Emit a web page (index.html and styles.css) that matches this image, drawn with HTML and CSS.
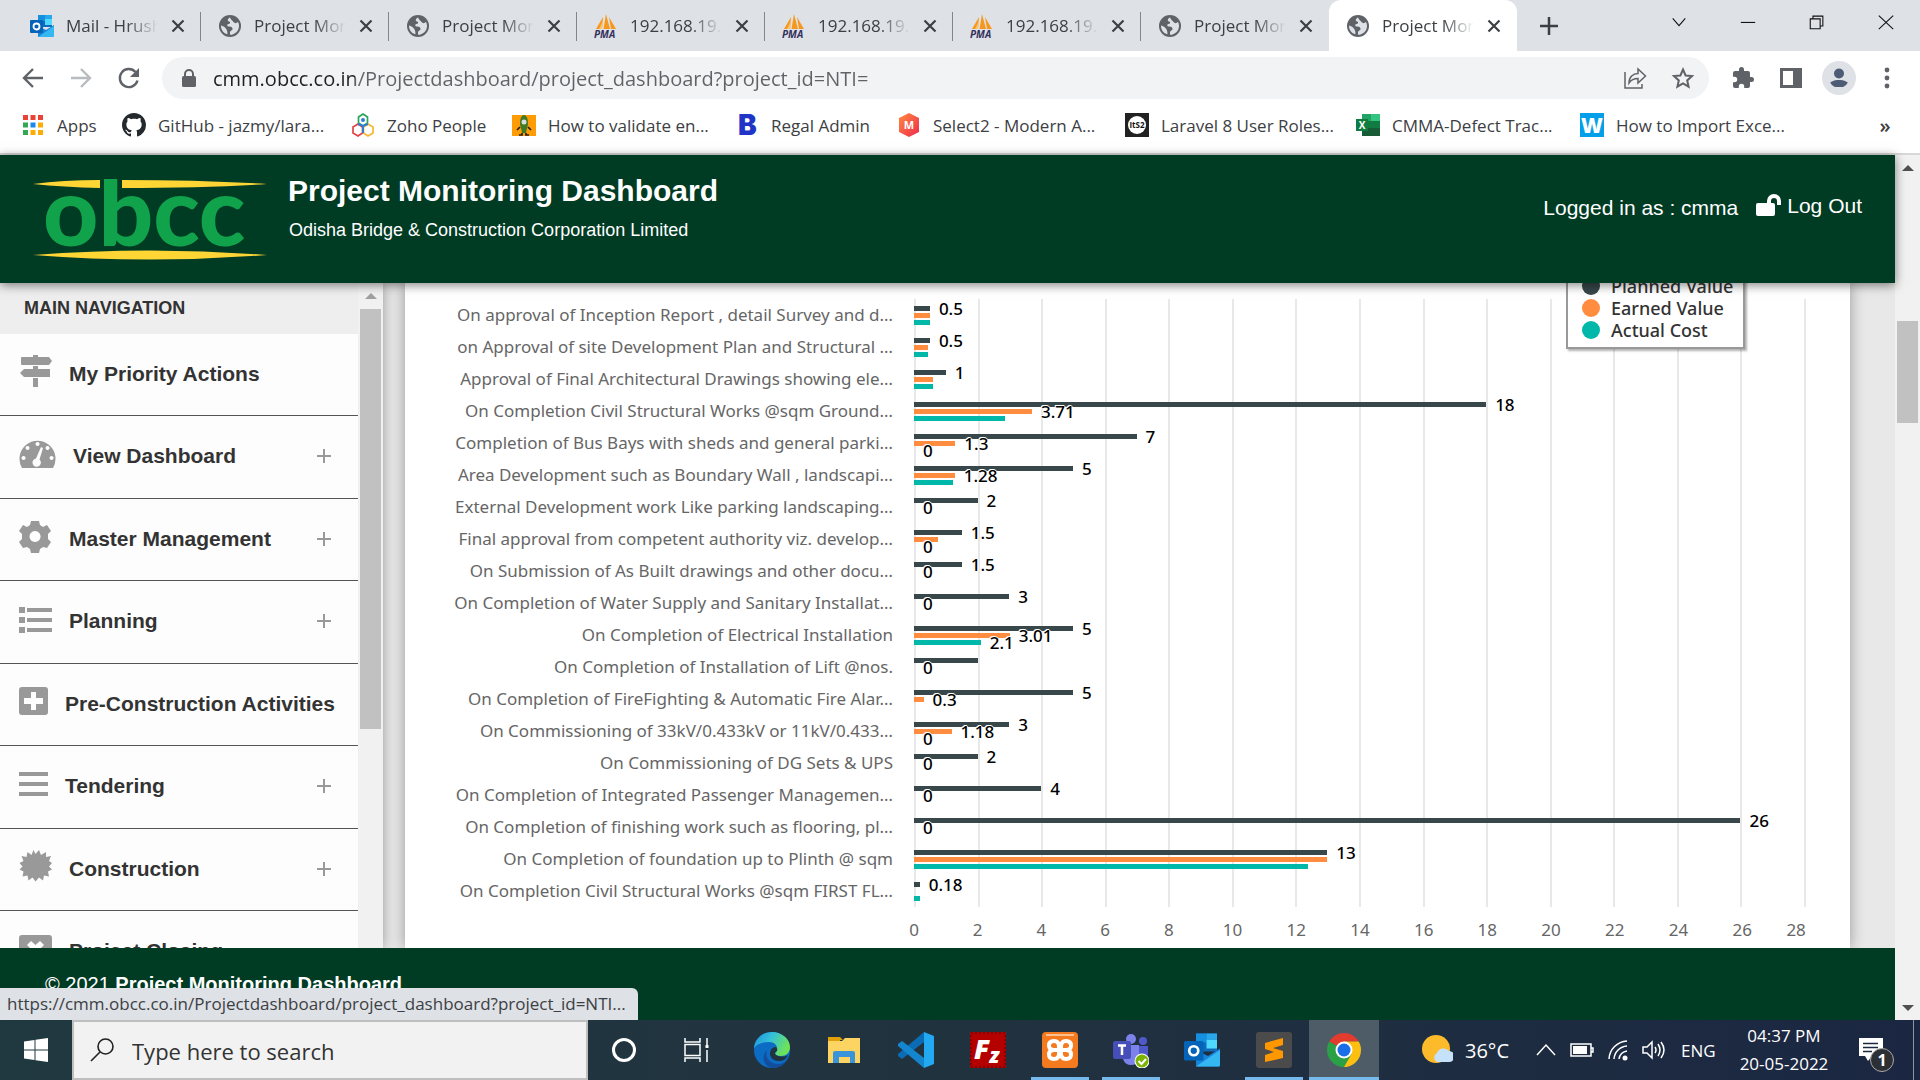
FILE: index.html
```html
<!DOCTYPE html>
<html lang="en">
<head>
<meta charset="utf-8">
<title>Project Monitoring Dashboard</title>
<link rel="stylesheet" href="styles.css">
</head>
<body>
<svg class="defs" aria-hidden="true">
  <symbol id="globe" viewBox="0 0 24 24"><circle cx="12" cy="12" r="11" fill="#5f6368"/><path d="M12 3.500C9 5 9.500 7 11 7.500c2 .5 1 2.500-.5 2.500S9 12 10 12.500c2 0 4 0 4.500 2s-2.500 2-2.500 4v2.300C16.500 21 21 17 21 12c0-1.500-.5-3-1-4-1.500 1.500-3.500 1.500-4.500 0S13 6 12 3.500zM3 11.500c2 .3 3.500 1.500 4.500 2.500s2 3 2 6.300C5.500 19.500 3 16 3 11.500z" fill="#dee1e6"/></symbol>
  <symbol id="close" viewBox="0 0 16 16"><path d="M2.500 2.500l11 11M13.500 2.500l-11 11" stroke="#3c4043" stroke-width="2.200" fill="none"/></symbol>
  <symbol id="pma" viewBox="0 0 24 24"><path d="M2 15L9 3l-1 12zM9.500 15L12 0l4 15zM15 3l7 12h-5z" fill="#f7981d"/><path d="M5 15L9 7l-1 8z" fill="#fcc36b"/><text x="0" y="23.500" font-size="10" font-weight="700" font-style="italic" fill="#33305c">PMA</text></symbol>
  <symbol id="outlook" viewBox="0 0 24 24"><path d="M8 1h14v12H8z" fill="#0f6cbd"/><path d="M8 1h7v6H8z" fill="#1490df"/><path d="M15 5h7v6h-7z" fill="#50d9ff"/><path d="M15 1h7v4h-7z" fill="#28a8ea"/><path d="M8 12l8 4 8-5v11a1 1 0 0 1-1 1H8z" fill="#1784d9"/><path d="M8 23l16-11v10a1 1 0 0 1-1 1z" fill="#35b8f1"/><rect y="6" width="13" height="13" rx="1" fill="#0364b8"/><circle cx="6.500" cy="12.500" r="3" fill="none" stroke="#fff" stroke-width="1.800"/></symbol>
  <symbol id="plus" viewBox="0 0 16 16"><path d="M8 1v14M1 8h14" stroke="#999" stroke-width="2" fill="none"/></symbol>
</svg>

<div class="tabs">
  <div class="tab"><svg class="fav"><use href="#outlook"/></svg><span class="tab-title">Mail - Hrushikesh</span><button class="tab-close" aria-label="Close tab"><svg><use href="#close"/></svg></button></div>
  <div class="tab"><svg class="fav"><use href="#globe"/></svg><span class="tab-title">Project Monitoring</span><button class="tab-close" aria-label="Close tab"><svg><use href="#close"/></svg></button></div>
  <div class="tab"><svg class="fav"><use href="#globe"/></svg><span class="tab-title">Project Monitoring</span><button class="tab-close" aria-label="Close tab"><svg><use href="#close"/></svg></button></div>
  <div class="tab"><svg class="fav"><use href="#pma"/></svg><span class="tab-title">192.168.19.10</span><button class="tab-close" aria-label="Close tab"><svg><use href="#close"/></svg></button></div>
  <div class="tab"><svg class="fav"><use href="#pma"/></svg><span class="tab-title">192.168.19.10</span><button class="tab-close" aria-label="Close tab"><svg><use href="#close"/></svg></button></div>
  <div class="tab"><svg class="fav"><use href="#pma"/></svg><span class="tab-title">192.168.19.10</span><button class="tab-close" aria-label="Close tab"><svg><use href="#close"/></svg></button></div>
  <div class="tab last"><svg class="fav"><use href="#globe"/></svg><span class="tab-title">Project Monitoring</span><button class="tab-close" aria-label="Close tab"><svg><use href="#close"/></svg></button></div>
  <div class="tab active"><svg class="fav"><use href="#globe"/></svg><span class="tab-title">Project Monitoring</span><button class="tab-close" aria-label="Close tab"><svg><use href="#close"/></svg></button></div>
  <button class="new-tab" aria-label="New tab"><svg viewBox="0 0 20 20"><path d="M10 1v18M1 10h18" stroke="#3c4043" stroke-width="2.500"/></svg></button>
  <div class="window-controls">
    <button aria-label="Search tabs"><svg viewBox="0 0 20 20"><path d="M3 6l7 8 7-8" class="thin"/></svg></button>
    <button aria-label="Minimize"><svg viewBox="0 0 20 20"><path d="M2 10.500h16" class="thin"/></svg></button>
    <button aria-label="Restore"><svg viewBox="0 0 20 20"><path d="M2.500 6.500h11v11h-11zM5.500 6V3.500h11v11H14" class="thin"/></svg></button>
    <button aria-label="Close"><svg viewBox="0 0 20 20"><path d="M2 3l16 15M18 3L2 18" class="thin"/></svg></button>
  </div>
</div>

<div class="toolbar">
  <button class="tool" aria-label="Back"><svg viewBox="0 0 24 24"><path d="M22 12H3M12 3l-9 9 9 9" class="stroke"/></svg></button>
  <button class="tool" aria-label="Forward"><svg viewBox="0 0 24 24"><path d="M2 12h19M12 3l9 9-9 9" class="stroke pale"/></svg></button>
  <button class="tool" aria-label="Reload"><svg viewBox="0 0 24 24"><path d="M20.500 14.500A9 9 0 1 1 18.500 6" class="stroke"/><path d="M22 2v9h-9z" fill="#5f6368"/></svg></button>
  <div class="omnibox">
    <svg class="lock" viewBox="0 0 14 18"><rect x="0" y="7" width="14" height="11" rx="1.500" fill="#5f6368"/><path d="M3 8V5a4 4 0 0 1 8 0v3" fill="none" stroke="#5f6368" stroke-width="2"/></svg>
    <input class="url" type="text" aria-label="Address" value="cmm.obcc.co.in/Projectdashboard/project_dashboard?project_id=NTI=">
    <button class="tool" aria-label="Share"><svg viewBox="0 0 24 24"><path d="M2 6v16h17v-4" class="line"/><path d="M6 17c0-6 4-9.500 9-9.500V3l7.500 7-7.500 7v-4.500c-4 0-7 1.500-9 4.500z" class="line"/></svg></button>
    <button class="tool" aria-label="Bookmark"><svg viewBox="0 0 24 24"><path d="M12 3.500l2.600 6 6.400.6-4.800 4.300 1.400 6.300-5.600-3.300-5.600 3.300 1.400-6.300L3 10.100l6.400-.6z" fill="none" stroke="#5f6368" stroke-width="2"/></svg></button>
  </div>
  <button class="tool" aria-label="Extensions"><svg viewBox="0 0 24 24"><path d="M20.500 11H19V7a2 2 0 0 0-2-2h-4V3.500a2.500 2.500 0 0 0-5 0V5H4a2 2 0 0 0-2 2v3.800h1.500a2.700 2.700 0 0 1 0 5.400H2V20a2 2 0 0 0 2 2h3.800v-1.500a2.700 2.700 0 0 1 5.400 0V22H17a2 2 0 0 0 2-2v-4h1.500a2.500 2.500 0 0 0 0-5z" fill="#5f6368"/></svg></button>
  <button class="tool" aria-label="Side panel"><svg viewBox="0 0 24 24"><path d="M1 2h22v20H1zM4 5v14h10V5z" fill="#5f6368" fill-rule="evenodd"/></svg></button>
  <button class="tool avatar" aria-label="Profile"><svg viewBox="0 0 20 20"><circle cx="10" cy="5.500" r="5" fill="#4d5b75"/><path d="M0 19v-2c0-3 5-5 10-5s10 2 10 5v2z" fill="#4d5b75"/></svg></button>
  <button class="tool" aria-label="Menu"><svg viewBox="0 0 24 24"><circle cx="12" cy="4" r="2.400" fill="#5f6368"/><circle cx="12" cy="12" r="2.400" fill="#5f6368"/><circle cx="12" cy="20" r="2.400" fill="#5f6368"/></svg></button>
</div>

<nav class="bookmarks" aria-label="Bookmarks">
  <a href="#"><svg viewBox="0 0 24 24"><path d="M2 2h5v5H2zM9.500 2h5v5h-5zM17 2h5v5h-5z" fill="#ea4335"/><path d="M2 9.500h5v5H2zM2 17h5v5H2z" fill="#34a853"/><path d="M9.500 9.500h5v5h-5z" fill="#1a88f0"/><path d="M17 9.500h5v5h-5zM9.500 17h5v5h-5zM17 17h5v5h-5z" fill="#fbad05"/></svg>Apps</a>
  <a href="#"><svg viewBox="0 0 16 16"><path fill="#24292e" d="M8 0C3.580 0 0 3.580 0 8c0 3.540 2.290 6.530 5.470 7.590.4.070.55-.17.55-.38 0-.19-.01-.82-.01-1.490-2.010.37-2.530-.49-2.690-.94-.09-.23-.48-.94-.82-1.130-.28-.15-.68-.52-.01-.53.63-.01 1.080.58 1.230.82.72 1.210 1.870.87 2.330.66.070-.52.28-.87.51-1.070-1.780-.2-3.640-.89-3.640-3.950 0-.87.31-1.590.82-2.150-.08-.2-.36-1.020.08-2.120 0 0 .67-.21 2.200.82.64-.18 1.320-.27 2-.27s1.360.09 2 .27c1.530-1.040 2.200-.82 2.200-.82.44 1.100.16 1.920.08 2.120.51.56.82 1.270.82 2.150 0 3.070-1.870 3.750-3.650 3.950.29.25.54.73.54 1.480 0 1.070-.01 1.930-.01 2.200 0 .21.15.46.55.38A8.010 8.010 0 0 0 16 8c0-4.420-3.580-8-8-8z"/></svg>GitHub - jazmy/lara...</a>
  <a href="#"><svg viewBox="0 0 24 24"><path d="M12 1l4.500 3v6L12 13l-4.500-3V4z" fill="none" stroke="#2ba45a" stroke-width="1.700"/><path d="M7 11l4.500 3v6L7 23l-5-3v-6z" fill="none" stroke="#e04549" stroke-width="1.700"/><path d="M17 11l5 3v6l-5 3-4.500-3v-6z" fill="none" stroke="#f5b82e" stroke-width="1.700"/><circle cx="12" cy="7" r="2" fill="#2f7fd0"/><path d="M7 11l5 2 5-2M12 13v7" stroke="#2f7fd0" stroke-width="2" fill="none"/></svg>Zoho People</a>
  <a href="#"><svg viewBox="0 0 24 24"><path fill="#ff9c05" d="M0 2h24v21H0z"/><ellipse cx="12" cy="10" rx="4" ry="8" fill="#3f7a25"/><circle cx="12" cy="9" r="2.500" fill="#ddd"/><path d="M9 14h6l-1 6h-4z" fill="#3f7a25"/><path d="M8 14l-3 3M16 14l3 3M10 20v2H7M14 20v2h3" stroke="#222" stroke-width="1.700" fill="none"/></svg>How to validate en...</a>
  <a href="#"><svg viewBox="0 0 24 24"><text x="3" y="22" font-size="28" font-weight="900" font-family="Inter, sans-serif" fill="#2035c7">B</text></svg>Regal Admin</a>
  <a href="#"><svg viewBox="0 0 24 24"><defs><linearGradient id="mg" x2="1" y2="1"><stop stop-color="#ff8a3c"/><stop offset="1" stop-color="#ee2a50"/></linearGradient></defs><path d="M12 0l10 5v14l-10 5-10-5V5z" fill="url(#mg)"/><text x="12" y="16" text-anchor="middle" font-size="11" font-weight="700" fill="#fff">M</text></svg>Select2 - Modern A...</a>
  <a href="#"><svg viewBox="0 0 24 24"><path fill="#222" d="M0 0h24v24H0z"/><circle cx="12" cy="12" r="9" fill="#fff"/><text x="12" y="15" text-anchor="middle" font-size="8" font-weight="700" fill="#111">ItS2</text></svg>Laravel 8 User Roles...</a>
  <a href="#"><svg viewBox="0 0 24 24"><path d="M6 1h9v7H6z" fill="#21a366"/><path d="M15 1h9v7h-9z" fill="#33c481"/><path d="M6 8h18v7H6z" fill="#107c41"/><path d="M6 15h18v8H6z" fill="#185c37"/><rect y="6" width="12" height="12" fill="#107c41"/><text x="6" y="15.500" text-anchor="middle" font-size="10" font-weight="700" fill="#fff">X</text></svg>CMMA-Defect Trac...</a>
  <a href="#"><svg viewBox="0 0 24 24"><path fill="#049fe8" d="M0 0h24v24H0z"/><text x="12" y="20" text-anchor="middle" font-size="21" font-weight="900" fill="#fff">W</text></svg>How to Import Exce...</a>
  <button class="more" aria-label="More bookmarks">»</button>
</nav>

<div class="viewport">
  <div class="page">
    <header class="site-header">
      <svg class="logo" viewBox="0 0 234 82" role="img" aria-label="obcc">
        <path d="M0 5Q30 1 67 1v8Q30 8 0 5zM89 1q80 0 145 4-60 4-145 4z" fill="#fdd535"/>
        <text class="logo-text" x="10" y="67">obcc</text>
        <path d="M0 76q117-9 234 0-117 9-234 0z" fill="#fdd535"/>
      </svg>
      <div class="brand">
        <h1>Project Monitoring Dashboard</h1>
        <p>Odisha Bridge &amp; Construction Corporation Limited</p>
      </div>
      <div class="account">
        <span>Logged in as : cmma</span>
        <a href="#"><svg viewBox="0 0 25 22"><rect y="9" width="19" height="13" rx="2" fill="#fff"/><path d="M13 10V7a5 5 0 0 1 10 0v4" fill="none" stroke="#fff" stroke-width="4"/></svg>Log Out</a>
      </div>
    </header>

    <div class="body">
      <aside class="sidebar">
        <nav class="menu" aria-label="Main navigation">
          <h2>MAIN NAVIGATION</h2>
          <a href="#"><svg class="ico" viewBox="0 0 33 33"><path d="M14 0h5v2h11l3 4-3 4H3q-1 0-1-1V3q0-1 1-1h11zM14 11h5v3h12v8H5l-4-4 4-4h9zM14 23h5v9h-5z"/></svg><span>My Priority Actions</span></a>
          <a href="#"><svg class="ico dash" viewBox="0 0 37 33"><path fill-rule="evenodd" d="M3 30A18 18 0 1 1 34 30zM18.500 4a2 2 0 1 0 .1 0zM8.500 8a2 2 0 1 0 .1 0zM28.500 8a2 2 0 1 0 .1 0zM4.500 18a2 2 0 1 0 .1 0zM32.500 18a2 2 0 1 0 .1 0zM22 9l-5 11.500a4.200 4.200 0 1 0 3.500 1L24 10z"/></svg><span>View Dashboard</span><svg class="plus"><use href="#plus"/></svg></a>
          <a href="#"><svg class="ico" viewBox="0 0 33 33"><path fill-rule="evenodd" d="M12 1h8l1 4 3 2 4-2 4 6-3 3v5l3 3-4 6-4-1-3 2-1 4h-8l-1-4-3-2-4 1-4-6 3-3v-5l-3-3 4-6 4 2 3-2zM16 11a5.500 5.500 0 1 0 .1 0z"/></svg><span>Master Management</span><svg class="plus"><use href="#plus"/></svg></a>
          <a href="#"><svg class="ico" viewBox="0 0 33 33"><path d="M0 4h6v6H0zM8 5h25v4H8zM0 14h6v6H0zM8 15h25v4H8zM0 24h6v6H0zM8 25h25v4H8z"/></svg><span>Planning</span><svg class="plus"><use href="#plus"/></svg></a>
          <a href="#"><svg class="ico slim" viewBox="0 0 29 33"><path fill-rule="evenodd" d="M3 2h23a3 3 0 0 1 3 3v22a3 3 0 0 1-3 3H3a3 3 0 0 1-3-3V5a3 3 0 0 1 3-3zM12 7v6H5v6h7v6h5v-6h7v-6h-7V7z"/></svg><span>Pre-Construction Activities</span></a>
          <a href="#"><svg class="ico slim" viewBox="0 0 29 33"><path d="M0 4h29v4H0zM0 14h29v4H0zM0 24h29v4H0z"/></svg><span>Tendering</span><svg class="plus"><use href="#plus"/></svg></a>
          <a href="#"><svg class="ico" viewBox="0 0 33 33"><path d="M16.500 4l3.500-4 2 5 5-3v5l5-1-2 5 3 2-3 3.500 3 3-4 2 1 5-5-1-1 5-4-3-3.500 4-3-4-4 3-1-5-5 1 1-5-4-2 3-3-3-3.500 4-2-2-5 5 1 1-5 4 3 2-5z"/></svg><span>Construction</span><svg class="plus"><use href="#plus"/></svg></a>
          <a href="#"><svg class="ico" viewBox="0 0 33 33"><path fill-rule="evenodd" d="M3 2h27a3 3 0 0 1 3 3v22a3 3 0 0 1-3 3H3a3 3 0 0 1-3-3V5a3 3 0 0 1 3-3zM12 8l-4 4 4 4-4 4 4 4 4.500-4 4.500 4 4-4-4-4 4-4-4-4-4.500 4z"/></svg><span>Project Closing</span></a>
        </nav>
        <div class="scrollbar side-scroll"><i class="arrow up"></i><i class="thumb"></i></div>
      </aside>

      <main class="content">
        <section class="card">
          <ul class="legend">
            <li><i class="planned"></i>Planned Value</li>
            <li><i class="earned"></i>Earned Value</li>
            <li><i class="actual"></i>Actual Cost</li>
          </ul>
          <div class="chart">
            <ol class="categories">
              <li>On approval of Inception Report , detail Survey and d…</li>
              <li>on Approval of site Development Plan and Structural …</li>
              <li>Approval of Final Architectural Drawings showing ele…</li>
              <li>On Completion Civil Structural Works @sqm Ground…</li>
              <li>Completion of Bus Bays with sheds and general parki…</li>
              <li>Area Development such as Boundary Wall , landscapi…</li>
              <li>External Development work Like parking landscaping…</li>
              <li>Final approval from competent authority viz. develop…</li>
              <li>On Submission of As Built drawings and other docu…</li>
              <li>On Completion of Water Supply and Sanitary Installat…</li>
              <li>On Completion of Electrical Installation</li>
              <li>On Completion of Installation of Lift @nos.</li>
              <li>On Completion of FireFighting &amp; Automatic Fire Alar…</li>
              <li>On Commissioning of 33kV/0.433kV or 11kV/0.433…</li>
              <li>On Commissioning of DG Sets &amp; UPS</li>
              <li>On Completion of Integrated Passenger Managemen…</li>
              <li>On Completion of finishing work such as flooring, pl…</li>
              <li>On Completion of foundation up to Plinth @ sqm</li>
              <li>On Completion Civil Structural Works @sqm FIRST FL…</li>
            </ol>
            <div class="plot">
              <div class="row"><i class="planned" style="--v:0.5"><b>0.5</b></i><i class="earned" style="--v:0.5"></i><i class="actual" style="--v:0.5"></i></div>
              <div class="row"><i class="planned" style="--v:0.5"><b>0.5</b></i><i class="earned" style="--v:0.45"></i><i class="actual" style="--v:0.45"></i></div>
              <div class="row"><i class="planned" style="--v:1"><b>1</b></i><i class="earned" style="--v:0.6"></i><i class="actual" style="--v:0.6"></i></div>
              <div class="row"><i class="planned" style="--v:18"><b>18</b></i><i class="earned" style="--v:3.71"><b>3.71</b></i><i class="actual" style="--v:2.87"></i></div>
              <div class="row"><i class="planned" style="--v:7"><b>7</b></i><i class="earned" style="--v:1.3"><b>1.3</b></i><i class="actual" style="--v:0"><b>0</b></i></div>
              <div class="row"><i class="planned" style="--v:5"><b>5</b></i><i class="earned" style="--v:1.28"><b>1.28</b></i><i class="actual" style="--v:1.22"></i></div>
              <div class="row"><i class="planned" style="--v:2"><b>2</b></i><i class="earned" style="--v:0"><b>0</b></i><i class="actual" style="--v:0"></i></div>
              <div class="row"><i class="planned" style="--v:1.5"><b>1.5</b></i><i class="earned" style="--v:0.75"></i><i class="actual" style="--v:0"><b>0</b></i></div>
              <div class="row"><i class="planned" style="--v:1.5"><b>1.5</b></i><i class="earned" style="--v:0"><b>0</b></i><i class="actual" style="--v:0"></i></div>
              <div class="row"><i class="planned" style="--v:3"><b>3</b></i><i class="earned" style="--v:0"><b>0</b></i><i class="actual" style="--v:0"></i></div>
              <div class="row"><i class="planned" style="--v:5"><b>5</b></i><i class="earned" style="--v:3.01"><b>3.01</b></i><i class="actual" style="--v:2.1"><b>2.1</b></i></div>
              <div class="row"><i class="planned" style="--v:2"></i><i class="earned" style="--v:0"><b>0</b></i><i class="actual" style="--v:0"></i></div>
              <div class="row"><i class="planned" style="--v:5"><b>5</b></i><i class="earned" style="--v:0.3"><b>0.3</b></i><i class="actual" style="--v:0"></i></div>
              <div class="row"><i class="planned" style="--v:3"><b>3</b></i><i class="earned" style="--v:1.18"><b>1.18</b></i><i class="actual" style="--v:0"><b>0</b></i></div>
              <div class="row"><i class="planned" style="--v:2"><b>2</b></i><i class="earned" style="--v:0"><b>0</b></i><i class="actual" style="--v:0"></i></div>
              <div class="row"><i class="planned" style="--v:4"><b>4</b></i><i class="earned" style="--v:0"><b>0</b></i><i class="actual" style="--v:0"></i></div>
              <div class="row"><i class="planned" style="--v:26"><b>26</b></i><i class="earned" style="--v:0"><b>0</b></i><i class="actual" style="--v:0"></i></div>
              <div class="row"><i class="planned" style="--v:13"><b>13</b></i><i class="earned" style="--v:13"></i><i class="actual" style="--v:12.4"></i></div>
              <div class="row"><i class="planned" style="--v:0.18"><b>0.18</b></i><i class="earned" style="--v:0"></i><i class="actual" style="--v:0.18"></i></div>
            </div>
            <div class="axis"><span>0</span><span>2</span><span>4</span><span>6</span><span>8</span><span>10</span><span>12</span><span>14</span><span>16</span><span>18</span><span>20</span><span>22</span><span>24</span><span>26</span><span>28</span></div>
          </div>
        </section>
      </main>
    </div>

    <footer class="site-footer">© 2021 <b>Project Monitoring Dashboard</b></footer>
  </div>
  <div class="scrollbar page-scroll"><i class="arrow up"></i><i class="thumb"></i><i class="arrow down"></i></div>
  <div class="status">https://cmm.obcc.co.in/Projectdashboard/project_dashboard?project_id=NTI...</div>
</div>

<div class="taskbar">
  <button class="task" aria-label="Start"><svg class="start" viewBox="0 0 24 24"><path d="M0 3.500l10.500-1.500v9.500H0zM11.500 1.800L24 0v11.500H11.500zM0 12.500h10.500V22L0 20.500zM11.500 12.500H24V24l-12.500-1.800z" fill="#fff"/></svg></button>
  <label class="search"><svg viewBox="0 0 24 24"><circle cx="15.500" cy="8.500" r="7.500" class="glass"/><path d="M10 14L1 23" class="glass"/></svg><input type="text" placeholder="Type here to search" aria-label="Search"></label>
  <button class="task" aria-label="Cortana"><svg viewBox="0 0 36 36"><circle cx="18" cy="18" r="10.500" fill="none" stroke="#fff" stroke-width="3"/></svg></button>
  <button class="task view" aria-label="Task view"><svg viewBox="0 0 36 36"><path d="M7 6v4h15V6M7 12.500h15v11H7zM7 30v-4h15v4M29 6v8M29 18v12" fill="none" stroke="#fff" stroke-width="1.500"/><path d="M27.500 13h3v3h-3z" fill="#fff"/></svg></button>
  <button class="task" aria-label="Edge"><svg viewBox="0 0 36 36"><defs><linearGradient id="e1" x2="1" y2=".4"><stop stop-color="#1a8fe0"/><stop offset=".5" stop-color="#35c1d9"/><stop offset="1" stop-color="#6de35a"/></linearGradient></defs><circle cx="18" cy="18" r="18" fill="#0c6cc4"/><path d="M0 17C0 7 8 0 18 0s18 7 18 15c0 6-4 9-9 9-4 0-6-1-6-3 0-1 2-2 2-5 0-3-3-6-8-6C7 10 1 13 0 17z" fill="url(#e1)"/><path d="M13 18c-3 8 4 15 12 14 3 0 6-2 8-4-3 6-9 8-15 8-9-2-11-12-5-18z" fill="#124e9c"/><path d="M22 15c3 3 0 5-1 6 0 2 3 3.500 7 3.500 3 0 4-.5 5.500-1.500-1 4-4 6-9 6-6 0-10-5-8-10 1-3 3-4 5.500-4z" fill="#21333f"/></svg></button>
  <button class="task" aria-label="File Explorer"><svg viewBox="0 0 36 36"><path d="M2 5h12l3 3h-3v6H2z" fill="#e1a008"/><path d="M2 9h14l3-3h15v25H2z" fill="#fcd462"/><path d="M7 31V21q0-2 2-2h18q2 0 2 2v10h-5v-6H13v6z" fill="#3a94d9"/></svg></button>
  <button class="task" aria-label="VS Code"><svg viewBox="0 0 36 36"><path d="M26 0l10 4v28l-10 4z" fill="#23a9f2"/><path d="M26 0v10L4 27l-4-3v-2z" fill="#0b6cb5"/><path d="M26 36V26L4 9l-4 3v2z" fill="#1486d0"/></svg></button>
  <button class="task" aria-label="FileZilla"><svg viewBox="0 0 36 36"><path d="M0 0h36v36H0z" fill="#b50000"/><path d="M1 1h34v34H1z" fill="none" stroke="#7d0505" stroke-width="2" stroke-dasharray="2 2"/><text x="4" y="27" font-size="27" font-style="italic" font-weight="900" fill="#fff">F<tspan dy="4" font-size="21">z</tspan></text></svg></button>
  <button class="task open" aria-label="XAMPP"><svg viewBox="0 0 36 36"><rect width="36" height="36" rx="4" fill="#f47a20"/><path d="M4 2h28v2H4z" fill="#ffc090"/><g fill="none" stroke="#fff" stroke-width="4"><path d="M17 18q1-9-5-9-5 0-5 4.500T12 18h12q5 0 5-4.500T24 9q-6 0-5 9M17 18q1 9-5 9-5 0-5-4.500T12 18M19 18q-1 9 5 9 5 0 5-4.500T24 18"/></g></svg></button>
  <button class="task open" aria-label="Teams"><svg viewBox="0 0 36 36"><circle cx="18" cy="7" r="5" fill="#7b83eb"/><circle cx="30" cy="9" r="4" fill="#5059c9"/><path d="M10 13h16v14q-2 6-8 6t-8-6z" fill="#7b83eb"/><path d="M26 14h9v12q-2 4-9 4z" fill="#5059c9"/><rect y="9" width="18" height="18" rx="2" fill="#464eb8"/><path d="M5 13.500h8M9 13v10" stroke="#fff" stroke-width="2.500"/><circle cx="29" cy="29" r="7.500" fill="#fff"/><circle cx="29" cy="29" r="6.500" fill="#7cb305"/><path d="M25.500 29l3 3 4.500-5" stroke="#fff" stroke-width="2" fill="none"/></svg></button>
  <button class="task" aria-label="Outlook"><svg><use href="#outlook"/></svg></button>
  <button class="task open" aria-label="Sublime Text"><svg viewBox="0 0 36 36"><rect width="36" height="36" rx="3" fill="#4b4b4b"/><path d="M9 11l18-5v7l-10 3 10 3v7L9 30v-7l9-3-9-3z" fill="#ff9800"/></svg></button>
  <button class="task open current" aria-label="Chrome"><svg viewBox="0 0 36 36"><path d="M18 18L3.300 9.500A17 17 0 0 1 32.700 9.500H18z" fill="#e33b2e"/><path d="M18 18l7.500 4.500L18 35A17 17 0 0 1 3.300 9.500z" fill="#2aa146"/><path d="M18 9.500h14.700A17 17 0 0 1 18 35l7.500-13z" fill="#fdc010"/><circle cx="18" cy="18" r="8.500" fill="#fff"/><circle cx="18" cy="18" r="6.500" fill="#1a6fe8"/></svg></button>
  <div class="tray">
    <svg class="weather" viewBox="0 0 32 32"><circle cx="15" cy="15" r="14" fill="#fdbb2c"/><path d="M16 28a5 5 0 0 1 0-9 7 7 0 0 1 12-2 5.500 5.500 0 0 1 0 11z" fill="#c6e2fa"/></svg>
    <span class="temp">36°C</span>
    <svg viewBox="0 0 24 24"><path d="M3 17l9-10 9 10" class="trayline"/></svg>
    <svg viewBox="0 0 24 24"><path d="M1 6h20v12H1zM21 10h2v4h-2" class="trayline"/><path d="M3 8h14v8H3z" fill="#fff"/></svg>
    <svg viewBox="0 0 24 24"><path d="M3 21A19 19 0 0 1 21 3M8 21A14 14 0 0 1 21 8M13 21a9 9 0 0 1 8-8" class="trayline"/><circle cx="19" cy="20" r="2.500" fill="#fff"/></svg>
    <svg viewBox="0 0 24 24"><path d="M1 9h4l5-5v16l-5-5H1zM13 9q2 3 0 6M16 6q4 6 0 12M19 4q6 8 0 16" class="trayline"/></svg>
    <span class="lang">ENG</span>
    <span class="clock">04:37 PM<br>20-05-2022</span>
    <button class="notes" aria-label="Notifications"><svg viewBox="0 0 24 24"><path d="M0 0h24v18H13l-4 5-3-5H0z" fill="#fff"/><path d="M4 5.500h15M4 9.500h15M4 13.500h9" stroke="#1c2840" stroke-width="1.500"/></svg><b>1</b></button>
    <i class="edge"></i>
  </div>
</div>
</body>
</html>
```
FILE: styles.css
```css
* { box-sizing: border-box; }

body {
  margin: 0;
  height: 100vh;
  display: flex;
  flex-direction: column;
  overflow: hidden;
  background: #fff;
  font-family: "Open Sans", "Noto Sans", sans-serif;
  color: #3c4043;
}

button {
  border: 0;
  padding: 0;
  background: none;
  font: inherit;
  color: inherit;
  display: flex;
  align-items: center;
  justify-content: center;
}

a { color: inherit; text-decoration: none; }
ul, ol { list-style: none; margin: 0; padding: 0; }
svg { display: block; flex: none; }
.defs { position: absolute; width: 0; height: 0; }

/* Browser tabs */
.tabs {
  flex: none;
  height: 51px;
  display: flex;
  align-items: stretch;
  padding-left: 13px;
  background: #dee1e6;
}
.tab {
  width: 188px;
  display: flex;
  align-items: center;
  gap: 12px;
  padding: 0 15px 0 17px;
  position: relative;
  font-size: 17px;
}
.tab:not(.active):not(.last)::after {
  content: "";
  position: absolute;
  right: 0;
  top: 12px;
  width: 1px;
  height: 29px;
  background: #80868b;
}
.tab.active { background: #fff; border-radius: 12px 12px 0 0; }
.fav { width: 24px; height: 24px; }
.tab-title {
  flex: 1;
  min-width: 0;
  overflow: hidden;
  white-space: nowrap;
  mask-image: linear-gradient(to right, #000 65%, transparent);
}
.tab-close svg { width: 16px; height: 16px; }
.new-tab { width: 64px; }
.new-tab svg { width: 20px; height: 20px; }
.window-controls { display: flex; margin-left: auto; padding-bottom: 8px; }
.window-controls button { width: 69px; }
.window-controls svg { width: 18px; height: 18px; }
.thin { fill: none; stroke: #111; stroke-width: 1.2; }

/* Toolbar */
.toolbar {
  flex: none;
  height: 54px;
  display: flex;
  align-items: center;
  padding: 0 9px;
}
.tool { width: 48px; height: 34px; flex: none; }
.tool svg { width: 24px; height: 24px; }
.stroke { fill: none; stroke: #5f6368; stroke-width: 2.4; }
.pale { stroke: #b9bcbf; }
.line { fill: none; stroke: #5f6368; stroke-width: 1.5; }
.omnibox {
  flex: 1;
  height: 42px;
  margin: 0 10px 0 9px;
  padding: 0 2px 0 20px;
  display: flex;
  align-items: center;
  border-radius: 21px;
  background: #f1f3f4;
}
.lock { width: 14px; height: 18px; }
.url {
  flex: 1;
  margin-left: 17px;
  padding: 0;
  border: 0;
  outline: 0;
  font: 20px "Open Sans", "Noto Sans", sans-serif;
  color: transparent;
  background: linear-gradient(to right, #202124 142px, #5f6368 142px);
  background-clip: text;
}
.avatar svg {
  width: 34px;
  height: 34px;
  padding: 7px;
  border-radius: 17px;
  background: #dee1e6;
}

/* Bookmarks */
.bookmarks {
  flex: none;
  height: 50px;
  display: grid;
  grid-template-columns: 101px 229px 161px 223px 162px 228px 231px 224px 1fr 70px;
  padding-left: 21px;
  padding-bottom: 8px;
  border-bottom: 2px solid #d8d8d8;
  font-size: 17px;
  white-space: nowrap;
}
.bookmarks a { display: flex; align-items: center; gap: 12px; }
.bookmarks svg { width: 24px; height: 24px; }
.more { font-size: 20px; font-weight: 600; }

/* Page */
.viewport { flex: 1; min-height: 0; display: flex; position: relative; }
.page {
  flex: 1;
  min-width: 0;
  display: flex;
  flex-direction: column;
  font-family: "Liberation Sans", Arial, sans-serif;
}
.site-header {
  flex: none;
  height: 128px;
  display: flex;
  align-items: flex-start;
  padding: 0 33px 0 33px;
  position: relative;
  z-index: 2;
  background: #003b24;
  box-shadow: 0 2px 10px rgba(0, 0, 0, .5);
  color: #fff;
}
.logo { width: 234px; height: 82px; margin-top: 24px; overflow: hidden; }
.logo-text {
  font: 900 96px Lato, sans-serif;
  fill: #10a34b;
}
.brand { padding: 18px 0 0 21px; }
.brand h1 { margin: 0; font-size: 30px; line-height: 36px; }
.brand p { margin: 10px 0 0 1px; font-size: 18px; line-height: 22px; }
.account {
  display: flex;
  align-items: flex-start;
  gap: 18px;
  margin: 39px 0 0 auto;
  font-size: 21px;
  line-height: 24px;
}
.account span { padding-top: 2px; }
.account a { display: flex; gap: 6px; }
.account svg { width: 25px; height: 22px; }

.body { flex: 1; min-height: 0; display: flex; overflow: hidden; background: #e8e8e8; }

/* Sidebar */
.sidebar {
  width: 383px;
  flex: none;
  display: flex;
  overflow: hidden;
  background: #fdfdfd;
  box-shadow: 0 0 12px rgba(0, 0, 0, .35);
}
.menu { flex: 1; min-width: 0; }
.menu h2 {
  margin: 0;
  padding-left: 24px;
  font-size: 18px;
  line-height: 50px;
  height: 51px;
  color: #333;
  background: #eee;
}
.menu a {
  height: 82px;
  display: flex;
  align-items: center;
  gap: 17px;
  padding: 0 26px 2px 19px;
  border-bottom: 1px solid #555;
  font-size: 21px;
  font-weight: 700;
  color: #333;
  white-space: nowrap;
}
.menu a:nth-of-type(even) { height: 83px; }
.ico { width: 33px; height: 33px; margin-bottom: 4px; fill: #999; }
.ico.dash { width: 37px; }
.ico.slim { width: 29px; }
.plus { width: 16px; height: 16px; margin-left: auto; }

.scrollbar {
  width: 25px;
  flex: none;
  display: flex;
  flex-direction: column;
  align-items: center;
  background: #f1f1f1;
}
.arrow { border: 6px solid transparent; }
.arrow.up { border-top: 0; border-bottom-color: #505050; margin-top: 10px; }
.arrow.down { border-bottom: 0; border-top-color: #505050; margin: auto 0 9px; }
.thumb { width: 21px; background: #c1c1c1; }
.page-scroll .thumb { height: 102px; margin-top: 150px; }
.side-scroll .arrow { border-bottom-color: #a0a0a0; }
.side-scroll .thumb { height: 420px; margin-top: 10px; }

/* Chart card */
.content { flex: 1; min-width: 0; padding: 0 45px 0 22px; }
.card {
  height: 100%;
  position: relative;
  padding: 16px 44px 0 0;
  background: #fff;
  box-shadow: 0 0 14px rgba(0, 0, 0, .35);
  font-family: "Noto Sans", "Open Sans", sans-serif;
}
.chart { display: grid; grid-template-columns: 488px 1fr; column-gap: 21px; }
.categories {
  text-align: right;
  font-size: 17px;
  line-height: 32px;
  color: #666;
  white-space: nowrap;
}
.plot {
  border-right: 2px solid #e8e8e8;
  background: repeating-linear-gradient(to right, #e8e8e8 0 2px, transparent 2px calc(100% / 14));
}
.row {
  height: 32px;
  display: flex;
  flex-direction: column;
  justify-content: center;
  gap: 2px;
}
.row i {
  height: 5px;
  width: calc(var(--v) / 28 * 100%);
  position: relative;
}
.planned { background: #37474a; }
.earned { background: #ff8c3f; }
.actual { background: #00b8aa; }
.row b {
  position: absolute;
  z-index: 1;
  left: 100%;
  top: -8px;
  margin-left: 9px;
  font: 500 17px/22px "Noto Sans", "Open Sans", sans-serif;
  color: #000;
  text-shadow: 1px 0 #fff, -1px 0 #fff, 0 1px #fff, 0 -1px #fff, 1px 1px #fff, -1px -1px #fff;
}
.axis {
  grid-column: 2;
  display: flex;
  justify-content: space-between;
  padding-top: 11px;
  font-size: 17px;
  line-height: 24px;
  color: #666;
}
.axis span { width: 0; display: flex; justify-content: center; }
.axis span:last-child { justify-content: flex-end; }
.legend {
  position: absolute;
  z-index: 1;
  right: 105px;
  top: -32px;
  width: 179px;
  padding: 22px 0 6px 14px;
  border: 2px solid #999;
  background: #fff;
  box-shadow: 2px 2px 2px rgba(0, 0, 0, .3);
  font-size: 18px;
  font-weight: 500;
  line-height: 22px;
  color: #333;
}
.legend li { display: flex; align-items: center; gap: 11px; }
.legend i { width: 18px; height: 18px; border-radius: 9px; }

.site-footer {
  flex: none;
  height: 72px;
  padding: 24px 45px 0;
  background: #003b24;
  color: #fff;
  font-size: 20px;
  line-height: 24px;
}
.status {
  position: absolute;
  z-index: 3;
  left: 0;
  bottom: 0;
  width: 638px;
  height: 32px;
  padding-left: 7px;
  border-radius: 0 6px 0 0;
  background: #dee1e6;
  font-size: 17px;
  line-height: 32px;
  white-space: nowrap;
}

/* Taskbar */
.taskbar {
  flex: none;
  height: 60px;
  display: flex;
  background: linear-gradient(to right, #20383f, #21323f 50%, #1b2742);
  color: #fff;
}
.task { width: 72px; border-bottom: 3px solid transparent; padding-top: 3px; }
.task.view { margin-right: 4px; }
.task svg { width: 36px; height: 36px; }
.task .start { width: 24px; height: 24px; }
.task.open { border-bottom-color: #76b9ed; background-clip: padding-box; }
.task.open:not(.current) { width: 58px; margin: 0 6px 0 7px; }
.task.current { width: 70px; background: #4e5c67; }
.search {
  width: 516px;
  display: flex;
  align-items: center;
  gap: 18px;
  padding-left: 16px;
  border: 2px solid #bfbfbf;
  background: #f2f2f2;
}
.search svg { width: 24px; height: 24px; }
.search input {
  flex: 1;
  padding: 2px 0 0;
  border: 0;
  background: none;
  font: 22px "Open Sans", "Noto Sans", sans-serif;
}
.search input::placeholder { color: #333; opacity: 1; }
.glass { fill: none; stroke: #222; stroke-width: 1.6; }
.tray {
  flex: 1;
  display: flex;
  align-items: center;
  font-size: 17px;
}
.tray svg { width: 24px; height: 24px; margin-right: 12px; }
.tray .weather { width: 32px; height: 32px; margin: 0 12px 0 42px; }
.temp { width: 69px; font-size: 20px; }
.trayline { fill: none; stroke: #fff; stroke-width: 1.5; }
.lang { width: 38px; margin-left: 3px; }
.clock { width: 130px; text-align: center; line-height: 28px; }
.notes { position: relative; margin-left: 10px; }
.notes svg { margin: 0; }
.notes b {
  position: absolute;
  left: 11px;
  top: 10px;
  width: 24px;
  height: 24px;
  border: 1px solid #aaa;
  border-radius: 12px;
  background: #2c2f33;
  font-size: 16px;
  line-height: 22px;
}
.edge { width: 1px; height: 60px; margin: 0 6px 0 auto; background: #8c95a0; }
```
